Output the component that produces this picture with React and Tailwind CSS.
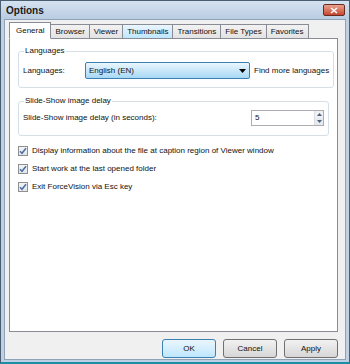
import React from 'react';

const tabs = ['General', 'Browser', 'Viewer', 'Thumbnails', 'Transitions', 'File Types', 'Favorites'];

function Check({ label }) {
  return (
    <div className="flex items-center gap-[4px] h-[18px]">
      <div className="w-[10px] h-[10px] border border-[#8e8f8f] bg-gradient-to-b from-[#f4f4f4] to-[#e2e6ea] flex items-center justify-center">
        <svg width="8" height="8" viewBox="0 0 8 8">
          <path d="M1 4.2 L3 6.3 L7 1.2" fill="none" stroke="#4a6fa5" strokeWidth="1.5" />
        </svg>
      </div>
      <span>{label}</span>
    </div>
  );
}

function Button({ children, focus }) {
  return (
    <div
      className={
        'w-[54px] h-[19px] rounded-[3px] flex items-center justify-center border ' +
        (focus
          ? 'border-[#3c7fb1] bg-gradient-to-b from-[#eaf6fd] to-[#bee6fd]'
          : 'border-[#707070] bg-gradient-to-b from-[#f2f2f2] to-[#d6d6d6]')
      }
    >
      {children}
    </div>
  );
}

export default function App() {
  return (
    <div
      className="w-[350px] h-[364px] bg-[#bfd0e4] border border-[#4b5d70] border-b-[2px] border-b-[#1c8fa6] flex flex-col text-[8px] text-[#111]"
      style={{ fontFamily: '"Liberation Sans", Arial, sans-serif' }}
    >
      {/* Title bar */}
      <div className="h-[18px] flex items-center justify-between pl-[5px] pr-[4px] bg-gradient-to-b from-[#d5e2f0] to-[#b9cce2]">
        <span className="text-[10px] font-bold text-[#1a1a1a]">Options</span>
        <div className="w-[22px] h-[12px] rounded-[2px] border border-[#6b2b20] bg-gradient-to-b from-[#e9a291] to-[#c4452e] flex items-center justify-center">
          <svg width="8" height="7" viewBox="0 0 8 7">
            <path d="M1 1 L7 6 M7 1 L1 6" stroke="#fff" strokeWidth="1.6" />
          </svg>
        </div>
      </div>

      {/* Body */}
      <div className="flex-1 mx-[3px] mb-[2px] bg-[#f0f0f0] border border-[#8fa3b8] flex flex-col px-[4px] pt-[2px]">
        {/* Tabs */}
        <div className="flex items-end h-[17px]">
          {tabs.map((t, i) => (
            <div
              key={t}
              className={
                'px-[4px] flex items-center border border-[#898c95] -ml-px first:ml-0 ' +
                (i === 0
                  ? 'h-[17px] bg-white border-b-white relative z-10 px-[6px]'
                  : i === 3
                  ? 'h-[15px] bg-gradient-to-b from-[#eaf6fd] to-[#bee6fd] border-[#3c7fb1] z-[5] relative'
                  : 'h-[15px] bg-gradient-to-b from-[#f2f2f2] to-[#e3e3e3]')
              }
            >
              {t}
            </div>
          ))}
        </div>

        {/* Tab panel */}
        <div className="w-[329px] h-[294px] -mt-px bg-white border border-[#898c95] px-[8px] pt-[6px]">
          {/* Languages group */}
          <fieldset className="border border-[#d5dfe5] rounded-[3px] px-[4px] pb-[8px] pt-[1px]">
            <legend className="px-[1px] ml-[1px]">Languages</legend>
            <div className="flex items-center mt-[4px] whitespace-nowrap">
              <span className="w-[62px] shrink-0">Languages:</span>
              <div className="w-[165px] shrink-0 h-[17px] rounded-[2px] border border-[#3c7fb1] bg-gradient-to-b from-[#eaf6fd] to-[#a7d9f5] flex items-center justify-between pl-[3px] pr-[3px]">
                <span>English (EN)</span>
                <svg width="7" height="4" viewBox="0 0 7 4">
                  <path d="M0 0 L7 0 L3.5 4 Z" fill="#000" />
                </svg>
              </div>
              <span className="ml-[4px]">Find more languages</span>
            </div>
          </fieldset>

          {/* Slide show group */}
          <fieldset className="mt-[7px] border border-[#d5dfe5] rounded-[3px] px-[4px] pb-[9px] pt-[1px]">
            <legend className="px-[1px] ml-[1px]">Slide-Show image delay</legend>
            <div className="flex items-center justify-between mt-[2px]">
              <span>Slide-Show image delay (in seconds):</span>
              <div className="w-[73px] h-[16px] border border-[#abadb3] flex items-center justify-between pl-[3px]">
                <span>5</span>
                <div className="w-[9px] h-full flex flex-col border-l border-[#dcdcdc]">
                  <div className="flex-1 flex items-center justify-center bg-[#eef0f3]">
                    <svg width="5" height="3" viewBox="0 0 5 3"><path d="M0 3 L5 3 L2.5 0 Z" fill="#4d6185" /></svg>
                  </div>
                  <div className="flex-1 flex items-center justify-center bg-[#e6e9ee]">
                    <svg width="5" height="3" viewBox="0 0 5 3"><path d="M0 0 L5 0 L2.5 3 Z" fill="#4d6185" /></svg>
                  </div>
                </div>
              </div>
            </div>
          </fieldset>

          {/* Checkboxes */}
          <div className="mt-[6px] flex flex-col">
            <Check label="Display information about the file at caption region of Viewer window" />
            <Check label="Start work at the last opened folder" />
            <Check label="Exit ForceVision via Esc key" />
          </div>
        </div>

        {/* Buttons */}
        <div className="flex justify-end gap-[7px] mt-[7px] pr-[3px]">
          <Button focus>OK</Button>
          <Button>Cancel</Button>
          <Button>Apply</Button>
        </div>
      </div>
    </div>
  );
}
